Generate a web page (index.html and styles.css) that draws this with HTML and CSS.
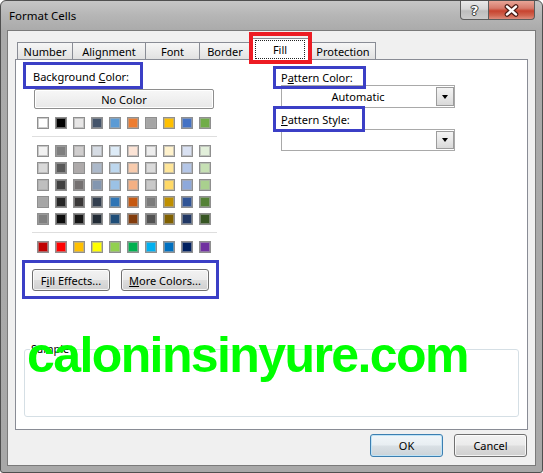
FILE: index.html
```html
<!DOCTYPE html>
<html>
<head>
<meta charset="utf-8">
<link rel="stylesheet" href="styles.css">
</head>
<body>
<div class="window">
  <div class="titlebar">
    <span class="title">Format Cells</span>
    <div class="controls">
      <div class="cbtn help">?</div>
      <div class="cbtn close">
        <svg width="46" height="19" viewBox="0 0 46 19">
          <path d="M18.5 5.5 L27.5 13.5 M27.5 5.5 L18.5 13.5" stroke="#4b1d16" stroke-width="5" stroke-linecap="round" fill="none"/>
          <path d="M18.5 5.5 L27.5 13.5 M27.5 5.5 L18.5 13.5" stroke="#ffffff" stroke-width="2.6" stroke-linecap="round" fill="none"/>
        </svg>
      </div>
    </div>
  </div>
  <div class="client">
    <div class="tabs">
      <div class="tab t-number">Number</div>
      <div class="tab t-align">Alignment</div>
      <div class="tab t-font">Font</div>
      <div class="tab t-border">Border</div>
      <div class="tab active t-fill"><span class="focus">Fill</span></div>
      <div class="tab t-prot">Protection</div>
    </div>
    <div class="panel">
      <div class="cols">
        <div class="left">
          <div class="label-box bg-label">Background&nbsp;<u>C</u>olor:</div>
          <div class="nocolor">No Color</div>
          <div class="swatches">
            <div class="grid">
              <i class="sw" style="--c:#FFFFFF"></i><i class="sw" style="--c:#000000"></i><i class="sw" style="--c:#E7E6E6"></i><i class="sw" style="--c:#44546A"></i><i class="sw" style="--c:#5B9BD5"></i><i class="sw" style="--c:#ED7D31"></i><i class="sw" style="--c:#A5A5A5"></i><i class="sw" style="--c:#FFC000"></i><i class="sw" style="--c:#4472C4"></i><i class="sw" style="--c:#70AD47"></i>
            </div>
            <div class="sep"></div>
            <div class="grid">
              <i class="sw" style="--c:#F2F2F2"></i><i class="sw" style="--c:#7F7F7F"></i><i class="sw" style="--c:#D0CECE"></i><i class="sw" style="--c:#D6DCE4"></i><i class="sw" style="--c:#DDEBF7"></i><i class="sw" style="--c:#FCE4D6"></i><i class="sw" style="--c:#EDEDED"></i><i class="sw" style="--c:#FFF2CC"></i><i class="sw" style="--c:#D9E1F2"></i><i class="sw" style="--c:#E2EFDA"></i>
              <i class="sw" style="--c:#D9D9D9"></i><i class="sw" style="--c:#595959"></i><i class="sw" style="--c:#AEAAAA"></i><i class="sw" style="--c:#ACB9CA"></i><i class="sw" style="--c:#BDD7EE"></i><i class="sw" style="--c:#F8CBAD"></i><i class="sw" style="--c:#DBDBDB"></i><i class="sw" style="--c:#FFE699"></i><i class="sw" style="--c:#B4C6E7"></i><i class="sw" style="--c:#C6E0B4"></i>
              <i class="sw" style="--c:#BFBFBF"></i><i class="sw" style="--c:#404040"></i><i class="sw" style="--c:#757171"></i><i class="sw" style="--c:#8497B0"></i><i class="sw" style="--c:#9BC2E6"></i><i class="sw" style="--c:#F4B084"></i><i class="sw" style="--c:#C9C9C9"></i><i class="sw" style="--c:#FFD966"></i><i class="sw" style="--c:#8EA9DB"></i><i class="sw" style="--c:#A9D08E"></i>
              <i class="sw" style="--c:#A6A6A6"></i><i class="sw" style="--c:#262626"></i><i class="sw" style="--c:#3A3838"></i><i class="sw" style="--c:#333F4F"></i><i class="sw" style="--c:#2F75B5"></i><i class="sw" style="--c:#C65911"></i><i class="sw" style="--c:#7B7B7B"></i><i class="sw" style="--c:#BF8F00"></i><i class="sw" style="--c:#305496"></i><i class="sw" style="--c:#548235"></i>
              <i class="sw" style="--c:#808080"></i><i class="sw" style="--c:#0D0D0D"></i><i class="sw" style="--c:#161616"></i><i class="sw" style="--c:#222B35"></i><i class="sw" style="--c:#1F4E78"></i><i class="sw" style="--c:#833C0C"></i><i class="sw" style="--c:#525252"></i><i class="sw" style="--c:#806000"></i><i class="sw" style="--c:#203764"></i><i class="sw" style="--c:#375623"></i>
            </div>
            <div class="sep"></div>
            <div class="grid">
              <i class="sw" style="--c:#C00000"></i><i class="sw" style="--c:#FF0000"></i><i class="sw" style="--c:#FFC000"></i><i class="sw" style="--c:#FFFF00"></i><i class="sw" style="--c:#92D050"></i><i class="sw" style="--c:#00B050"></i><i class="sw" style="--c:#00B0F0"></i><i class="sw" style="--c:#0070C0"></i><i class="sw" style="--c:#002060"></i><i class="sw" style="--c:#7030A0"></i>
            </div>
          </div>
          <div class="label-box fx-box">
            <div class="btn fx-fill">F<u>i</u>ll Effects...</div>
            <div class="btn fx-more"><u>M</u>ore Colors...</div>
          </div>
        </div>
        <div class="right">
          <div class="label-box pc-label">P<u>a</u>ttern Color:</div>
          <div class="select sel-color"><span class="sel-text">Automatic</span><span class="arrow"></span></div>
          <div class="label-box ps-label"><u>P</u>attern Style:</div>
          <div class="select sel-style"><span class="sel-text"></span><span class="arrow"></span></div>
        </div>
      </div>
      <fieldset class="sample">
        <legend>Sample</legend>
        <div class="sample-body"></div>
      </fieldset>
    </div>
    <div class="footer">
      <div class="btn dlg ok">OK</div>
      <div class="btn dlg">Cancel</div>
    </div>
  </div>
  <div class="watermark">caloninsinyure.com</div>
</div>
</body>
</html>
```

FILE: styles.css
```css
html, body {
  margin: 0;
  padding: 0;
  background: #ffffff;
}
body {
  font-family: "Noto Sans", "DejaVu Sans", sans-serif;
  font-size: 11px;
  color: #000;
}
.window {
  position: relative;
  width: 543px;
  height: 473px;
  box-sizing: border-box;
  border: 1px solid #4f4f4f;
  border-radius: 6px 6px 3px 3px;
  padding: 0 6px;
  background: linear-gradient(180deg, #c6c6c6 0px, #b6b6b6 14px, #aaaaaa 30px, #a8a8a8 100%);
  overflow: hidden;
}
.titlebar {
  height: 29px;
  margin: 0 -6px;
  display: flex;
  align-items: flex-start;
}
.title {
  padding: 8px 0 0 8px;
  line-height: 14px;
  font-size: 11.5px;
  color: #000;
}
.controls {
  margin-left: auto;
  margin-right: 7px;
  display: flex;
}
.cbtn {
  height: 19px;
  box-sizing: border-box;
  border: 1px solid #5c5c5c;
  border-top: none;
  display: flex;
  align-items: center;
  justify-content: center;
}
.help {
  width: 29px;
  border-radius: 0 0 0 4px;
  margin-right: -1px;
  background: linear-gradient(180deg, #e9e9e9 0%, #d5d5d5 45%, #bdbdbd 55%, #cbcbcb 100%);
  color: #fff;
  font-family: "DejaVu Sans", sans-serif;
  font-weight: bold;
  font-size: 13px;
  line-height: 1;
  text-shadow: 0 0 1px #333, 0 0 1px #333, 1px 0 0 #444, -1px 0 0 #444, 0 1px 0 #444, 0 -1px 0 #444;
}
.close {
  width: 47px;
  border-radius: 0 0 4px 0;
  background: linear-gradient(180deg, #e8a597 0%, #d67a6b 40%, #c7432f 55%, #d0644f 80%, #dd8c7c 100%);
}
.close svg { display: block; }
.client {
  height: 436px;
  box-sizing: border-box;
  background: #f0f0f0;
  border: 1px solid #7a7a7a;
}
.tabs {
  display: flex;
  align-items: flex-end;
  height: 28px;
  padding-left: 9px;
}
.tab {
  height: 17px;
  box-sizing: border-box;
  border: 1px solid #898c95;
  border-bottom: none;
  margin-right: -1px;
  background: linear-gradient(180deg, #f6f6f6 0%, #ececec 50%, #e1e1e1 100%);
  display: flex;
  align-items: center;
  justify-content: center;
  line-height: 14px;
  padding-top: 1px;
}
.t-number { width: 56px; }
.t-align { width: 74px; }
.t-font { width: 55px; }
.t-border { width: 52px; }
.t-fill { width: 61px; }
.t-prot { width: 66px; }
.tab.active {
  height: 22px;
  margin-bottom: -1px;
  background: #fff;
  position: relative;
  z-index: 2;
  align-items: flex-start;
  padding-top: 1px;
}
.focus {
  width: 50px;
  height: 19px;
  box-sizing: border-box;
  border: 1px dotted #222;
  display: flex;
  align-items: center;
  justify-content: center;
  margin-left: -1px;
}
.tab.active::after {
  content: "";
  position: absolute;
  left: -2px;
  top: -7px;
  width: 63px;
  height: 32px;
  box-sizing: border-box;
  border: 4px solid #ed1c24;
}
.panel {
  position: relative;
  z-index: 1;
  margin: 0 7px;
  height: 371px;
  box-sizing: border-box;
  background: #fff;
  border: 1px solid #898c95;
  display: flex;
  flex-direction: column;
}
.cols {
  display: flex;
  padding: 2px 0 0 7px;
}
.left {
  width: 196px;
  display: flex;
  flex-direction: column;
  align-items: flex-start;
}
.label-box {
  position: relative;
  z-index: 1;
  box-sizing: border-box;
  border: 3px solid #3b3fc6;
  display: flex;
  align-items: center;
  white-space: nowrap;
}
.bg-label {
  width: 120px;
  height: 27px;
  padding-left: 7px;
  padding-top: 1px;
}
.nocolor {
  margin-left: 11px;
  width: 180px;
  height: 20px;
  box-sizing: border-box;
  border: 1px solid #8e8e8e;
  border-radius: 2px;
  background: linear-gradient(180deg, #f7f7f7 0%, #f0f0f0 50%, #e8e8e8 100%);
  box-shadow: inset 0 0 0 1px #ffffff;
  display: flex;
  align-items: center;
  justify-content: center;
}
.swatches {
  margin: 8px 0 0 9px;
  width: 185px;
}
.grid {
  display: grid;
  grid-template-columns: repeat(10, 12px);
  column-gap: 6px;
  row-gap: 5px;
  padding-left: 5px;
}
.sw {
  display: block;
  width: 12px;
  height: 12px;
  box-sizing: border-box;
  border: 1px solid #8f8f8f;
  box-shadow: inset 0 0 0 1px rgba(170,170,170,0.6);
  background: var(--c);
}
.sep {
  height: 1px;
  background: #dedede;
  margin: 7px 0 8px;
}
.fx-box {
  margin: 7px 0 0 -1px;
  width: 197px;
  height: 39px;
  padding: 6px 0 0 7px;
  align-items: flex-start;
  gap: 11px;
}
.btn {
  box-sizing: border-box;
  border: 1px solid #707070;
  border-radius: 3px;
  background: linear-gradient(180deg, #f2f2f2 0%, #ebebeb 48%, #dddddd 52%, #cfcfcf 100%);
  box-shadow: inset 0 0 0 1px rgba(255,255,255,0.75);
  display: flex;
  align-items: center;
  justify-content: center;
  white-space: nowrap;
}
.fx-fill { width: 78px; height: 22px; }
.fx-more { width: 88px; height: 22px; }
.right {
  margin-left: 54px;
  margin-top: 4px;
  width: 182px;
  display: flex;
  flex-direction: column;
  align-items: flex-start;
}
.pc-label {
  width: 93px;
  height: 23px;
  padding-left: 5px;
}
.ps-label {
  width: 92px;
  height: 26px;
  padding-left: 5px;
  margin-top: -2px;
}
.select {
  margin-left: 8px;
  width: 174px;
  height: 23px;
  box-sizing: border-box;
  border: 1px solid #a9a9a9;
  background: #fff;
  display: flex;
  align-items: center;
}
.sel-color { margin-top: -4px; }
.sel-style { margin-top: -3px; height: 22px; }
.sel-text {
  flex: 1;
  text-align: center;
  padding-right: 2px;
}
.arrow {
  width: 18px;
  height: 19px;
  box-sizing: border-box;
  border: 1px solid #9c9c9c;
  background: linear-gradient(180deg, #f4f4f4 0%, #e8e8e8 50%, #d9d9d9 100%);
  display: flex;
  align-items: center;
  justify-content: center;
}
.sel-style .arrow { height: 18px; }
.arrow::after {
  content: "";
  width: 0;
  height: 0;
  border-left: 3.5px solid transparent;
  border-right: 3.5px solid transparent;
  border-top: 4px solid #000;
}
.sample {
  margin: auto 8px 12px 8px;
  padding: 0 0 0 5px;
  border: 1px solid #d5dfe5;
  border-radius: 3px;
  min-width: 0;
}
.sample legend {
  padding: 0 1px;
  line-height: 14px;
}
.sample-body {
  height: 60px;
}
.footer {
  display: flex;
  justify-content: flex-end;
  gap: 11px;
  padding: 4px 8px 0 0;
}
.dlg {
  width: 73px;
  height: 23px;
}
.ok {
  border-color: #3c7fb1;
  box-shadow: inset 0 0 0 1px #bfe3f6;
  background: linear-gradient(180deg, #f1f6f9 0%, #e8eef2 48%, #d9e0e5 52%, #ccd3d8 100%);
}
.watermark {
  position: absolute;
  left: 26px;
  top: 329px;
  z-index: 5;
  font-family: "Liberation Sans", Arial, sans-serif;
  font-weight: bold;
  font-size: 50px;
  line-height: 50px;
  letter-spacing: -1.6px;
  color: #00ff00;
  white-space: nowrap;
}
```
